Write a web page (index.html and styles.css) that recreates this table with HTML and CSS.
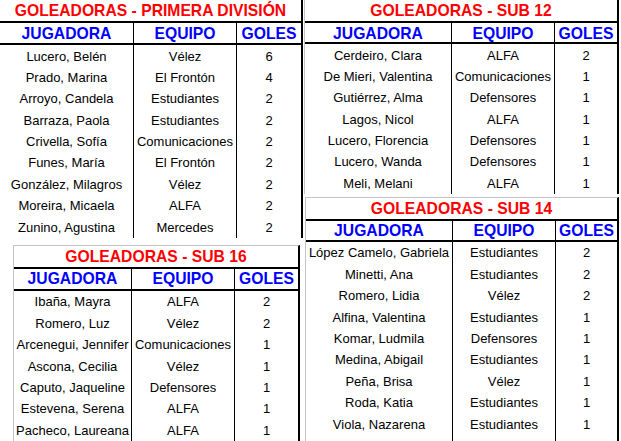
FILE: index.html
```html
<!DOCTYPE html>
<html lang="es">
<head>
<meta charset="utf-8">
<title>Goleadoras</title>
<link rel="stylesheet" href="styles.css">
</head>
<body>
<div class="page">
  <div class="col-left">
    <section class="sheet s1">
      <div class="title">GOLEADORAS - PRIMERA DIVISIÓN</div>
      <div class="th">JUGADORA</div><div class="th">EQUIPO</div><div class="th">GOLES</div>
      <div class="td">Lucero, Belén</div><div class="td">Vélez</div><div class="td">6</div>
      <div class="td">Prado, Marina</div><div class="td">El Frontón</div><div class="td">4</div>
      <div class="td">Arroyo, Candela</div><div class="td">Estudiantes</div><div class="td">2</div>
      <div class="td">Barraza, Paola</div><div class="td">Estudiantes</div><div class="td">2</div>
      <div class="td">Crivella, Sofía</div><div class="td">Comunicaciones</div><div class="td">2</div>
      <div class="td">Funes, María</div><div class="td">El Frontón</div><div class="td">2</div>
      <div class="td">González, Milagros</div><div class="td">Vélez</div><div class="td">2</div>
      <div class="td">Moreira, Micaela</div><div class="td">ALFA</div><div class="td">2</div>
      <div class="td">Zunino, Agustina</div><div class="td">Mercedes</div><div class="td">2</div>
    </section>
    <section class="sheet s3">
      <div class="title">GOLEADORAS - SUB 16</div>
      <div class="th">JUGADORA</div><div class="th">EQUIPO</div><div class="th">GOLES</div>
      <div class="td">Ibaña, Mayra</div><div class="td">ALFA</div><div class="td">2</div>
      <div class="td">Romero, Luz</div><div class="td">Vélez</div><div class="td">2</div>
      <div class="td">Arcenegui, Jennifer</div><div class="td">Comunicaciones</div><div class="td">1</div>
      <div class="td">Ascona, Cecilia</div><div class="td">Vélez</div><div class="td">1</div>
      <div class="td">Caputo, Jaqueline</div><div class="td">Defensores</div><div class="td">1</div>
      <div class="td">Estevena, Serena</div><div class="td">ALFA</div><div class="td">1</div>
      <div class="td">Pacheco, Laureana</div><div class="td">ALFA</div><div class="td">1</div>
    </section>
  </div>
  <div class="col-right">
    <section class="sheet s2">
      <div class="title">GOLEADORAS - SUB 12</div>
      <div class="th">JUGADORA</div><div class="th">EQUIPO</div><div class="th">GOLES</div>
      <div class="td">Cerdeiro, Clara</div><div class="td">ALFA</div><div class="td">2</div>
      <div class="td">De Mieri, Valentina</div><div class="td">Comunicaciones</div><div class="td">1</div>
      <div class="td">Gutiérrez, Alma</div><div class="td">Defensores</div><div class="td">1</div>
      <div class="td">Lagos, Nicol</div><div class="td">ALFA</div><div class="td">1</div>
      <div class="td">Lucero, Florencia</div><div class="td">Defensores</div><div class="td">1</div>
      <div class="td">Lucero, Wanda</div><div class="td">Defensores</div><div class="td">1</div>
      <div class="td">Meli, Melani</div><div class="td">ALFA</div><div class="td">1</div>
    </section>
    <section class="sheet s4">
      <div class="title">GOLEADORAS - SUB 14</div>
      <div class="th">JUGADORA</div><div class="th">EQUIPO</div><div class="th">GOLES</div>
      <div class="td">López Camelo, Gabriela</div><div class="td">Estudiantes</div><div class="td">2</div>
      <div class="td">Minetti, Ana</div><div class="td">Estudiantes</div><div class="td">2</div>
      <div class="td">Romero, Lidia</div><div class="td">Vélez</div><div class="td">2</div>
      <div class="td">Alfina, Valentina</div><div class="td">Estudiantes</div><div class="td">1</div>
      <div class="td">Komar, Ludmila</div><div class="td">Defensores</div><div class="td">1</div>
      <div class="td">Medina, Abigail</div><div class="td">Estudiantes</div><div class="td">1</div>
      <div class="td">Peña, Brisa</div><div class="td">Vélez</div><div class="td">1</div>
      <div class="td">Roda, Katia</div><div class="td">Estudiantes</div><div class="td">1</div>
      <div class="td">Viola, Nazarena</div><div class="td">Estudiantes</div><div class="td">1</div>
      <div class="td"></div><div class="td"></div><div class="td"></div>
    </section>
  </div>
</div>
</body>
</html>
```
FILE: styles.css
```css
html, body {
  margin: 0;
  padding: 0;
  background: #ffffff;
}
body {
  font-family: "Liberation Sans", Arial, sans-serif;
  color: #000000;
}
.page {
  display: flex;
  width: 621px;
  height: 441px;
  overflow: hidden;
}
.col-left {
  width: 303px;
  display: flex;
  flex-direction: column;
  align-items: flex-start;
}
.col-right {
  width: 318px;
  display: flex;
  flex-direction: column;
  align-items: flex-start;
}
.sheet {
  display: grid;
  grid-template-columns: var(--c1) var(--c2) var(--c3);
  grid-template-rows: 23px var(--hr);
  grid-auto-rows: 21.4px;
}
.sheet > * {
  box-sizing: border-box;
  text-align: center;
  white-space: nowrap;
  overflow: hidden;
}
.sheet > :nth-child(3n),
.sheet > :nth-child(3n+4) {
  border-left: 1px solid #000000;
}
.title {
  grid-column: 1 / -1;
  border-bottom: 2px solid #000000;
  color: #ff0000;
  font-weight: bold;
  font-size: 15.7px;
  line-height: 20px;
  padding-top: 1px;
}
.th {
  border-bottom: 2px solid #000000;
  color: #0000ff;
  font-weight: bold;
  font-size: 15.7px;
  line-height: 19px;
  padding-top: 0.5px;
}
.td {
  font-size: 13px;
  line-height: 18.9px;
  padding-top: 2.5px;
}
.s1 {
  --c1: 133px;
  --c2: 103px;
  --c3: 65px;
  --hr: 22px;
  border-right: 2px solid #000000;
}
.s3 {
  --c1: 117px;
  --c2: 103px;
  --c3: 64px;
  --hr: 22px;
  margin: 7.4px 0 0 13px;
  border-top: 1px solid #c4c4c4;
  border-left: 1px solid #c4c4c4;
  border-right: 2px solid #000000;
}
.s2 {
  --c1: 146px;
  --c2: 103px;
  --c3: 63px;
  --hr: 21px;
  margin-left: 1px;
  border-left: 1px solid #c4c4c4;
  border-right: 2px solid #000000;
}
.s4 {
  --c1: 146px;
  --c2: 103px;
  --c3: 62px;
  --hr: 21px;
  margin: 3.2px 0 0 2px;
  border-top: 1px solid #c4c4c4;
  border-left: 1px solid #c4c4c4;
  border-right: 2px solid #000000;
}
```
